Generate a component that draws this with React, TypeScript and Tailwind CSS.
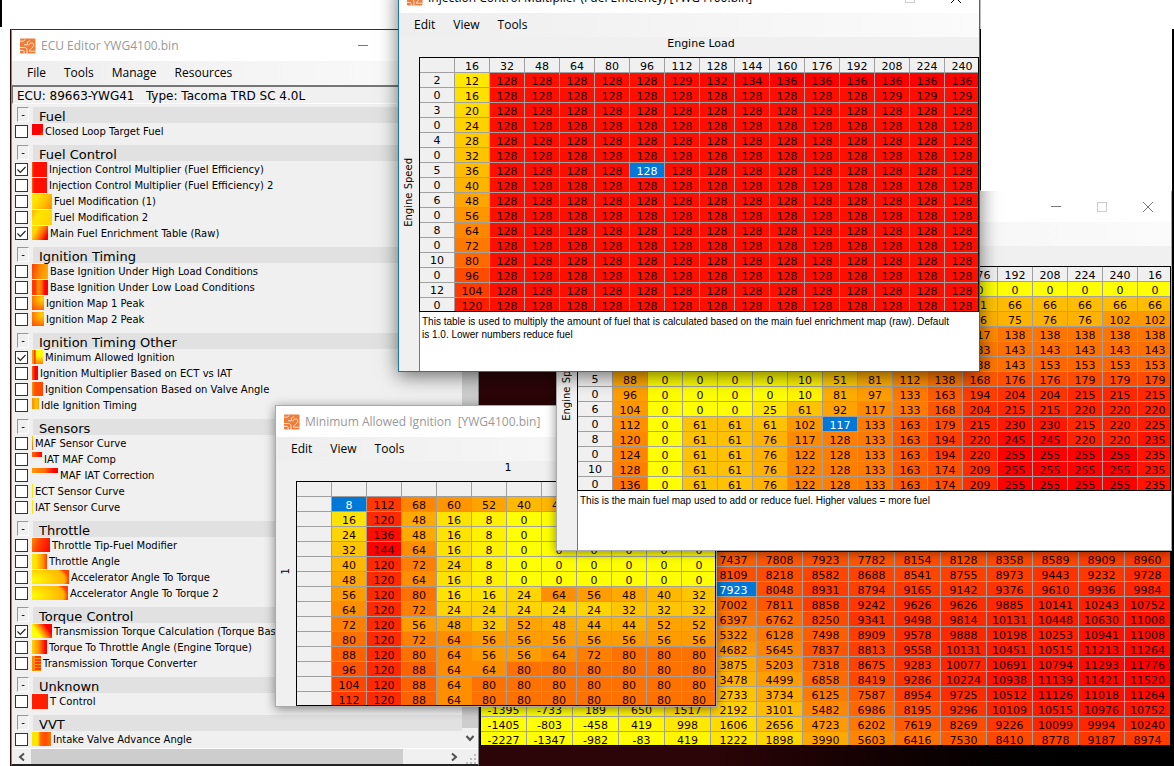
import React from "react";

type Cell = number | null;

const MENU_FONT = "font-['Open_Sans','Noto_Sans',sans-serif]";

/* Splits a block of text into rows of numbers; "." marks a cell with no value. */
function parse(block: string): Cell[][] {
  return block
    .trim()
    .split("\n")
    .map((line) => line.trim().split(/\s+/).map((v) => (v === "." ? null : Number(v))));
}

/* Yellow at zero, through orange, to red at the table's maximum. */
function heat(value: Cell, max: number): string {
  if (value === null) return "rgb(255, 200, 0)";
  const ratio = Math.min(1, Math.max(0, value / max));
  return `rgb(255, ${Math.round(255 * (1 - ratio))}, 0)`;
}

const injection: Cell[][] = [
  [12, 128, 128, 128, 128, 128, 129, 132, 134, 136, 136, 136, 136, 136, 136],
  [16, 128, 128, 128, 128, 128, 128, 128, 128, 128, 128, 128, 129, 129, 129],
  ...[20, 24, 28, 32, 36, 40, 48, 56, 64, 72, 80, 96, 104, 120].map((first) => [
    first,
    ...Array<number>(14).fill(128),
  ]),
];

const minimum = parse(`
8 112 68 60 52 40 40 . . . .
16 120 48 16 8 0 0 0 0 0 0
24 136 48 16 8 0 0 0 0 0 0
32 144 64 16 8 0 0 0 0 0 0
40 120 72 24 8 0 0 0 0 0 0
48 120 64 16 8 0 0 0 0 0 0
56 120 80 16 16 24 64 56 48 40 32
64 120 72 24 24 24 24 24 32 32 32
72 120 56 48 32 52 48 44 44 52 52
80 120 72 64 56 56 56 56 56 56 56
88 120 80 64 56 56 64 72 80 80 80
96 120 88 64 64 80 80 80 80 80 80
104 120 88 64 80 80 80 80 80 80 80
112 120 88 64 80 80 80 80 80 80 80
`);

const mainFuel = parse(`
. . . . . . . . . . 0 0 0 0 0 0
. . . . . . . . . . 61 66 66 66 66 66
. . . . . . . . . . 76 75 76 76 102 102
. . . . . . . . . . 117 138 138 138 138 138
. . . . . . . . . . 133 143 143 143 143 143
. . . . . . . . . . 138 143 153 153 153 153
88 0 0 0 0 10 51 81 112 138 168 176 176 179 179 179
96 0 0 0 0 10 81 97 133 163 194 204 204 215 215 215
104 0 0 0 25 61 92 117 133 168 204 215 215 220 220 220
112 0 61 61 61 102 117 133 163 179 215 230 230 215 220 225
120 0 61 61 76 117 128 133 163 194 220 245 245 220 220 235
124 0 61 61 76 122 128 133 163 194 220 255 255 255 255 235
128 0 61 61 76 122 128 133 163 174 209 255 255 255 255 235
136 0 61 61 76 122 128 133 163 174 209 255 255 255 255 235
`);

const torque = parse(`
. . . . . 7437 7808 7923 7782 8154 8128 8358 8589 8909 8960
. . . . . 8109 8218 8582 8688 8541 8755 8973 9443 9232 9728
. . . . . 7923 8048 8931 8794 9165 9142 9376 9610 9936 9984
. . . . . 7002 7811 8858 9242 9626 9626 9885 10141 10243 10752
. . . . . 6397 6762 8250 9341 9498 9814 10131 10448 10630 11008
. . . . . 5322 6128 7498 8909 9578 9888 10198 10253 10941 11008
. . . . . 4682 5645 7837 8813 9558 10131 10451 10515 11213 11264
. . . . . 3875 5203 7318 8675 9283 10077 10691 10794 11293 11776
. . . . . 3478 4499 6858 8419 9286 10224 10938 11139 11421 11520
. . . . . 2733 3734 6125 7587 8954 9725 10512 11126 11018 11264
-1395 -733 189 650 1517 2192 3101 5482 6986 8195 9296 10109 10515 10976 10752
-1405 -803 -458 419 998 1606 2656 4723 6202 7619 8269 9226 10099 9994 10240
-2227 -1347 -982 -83 419 1222 1898 3990 5603 6416 7530 8410 8778 9187 8974
`);

type GridProps = {
  label: string;
  data: Cell[][];
  max: number;
  selected: [number, number];
  columns?: string[];
  rows?: string[];
  wide?: boolean;
};

function HeatTable({ label, data, max, selected, columns, rows, wide }: GridProps) {
  const count = data[0].length;
  const width = wide ? "w-[46px]" : "w-[35px]";
  const cell = "h-[15px] border-r border-b border-[#a0a0a0] px-0 pb-0 text-center font-normal";
  return (
    <table
      aria-label={label}
      className="-mb-0.5 w-max table-fixed border-separate border-spacing-0 text-[11px] text-black"
    >
      <colgroup>
        {rows && <col className="w-[35px]" />}
        {data[0].map((_, i) => (
          <col key={i} className={width} />
        ))}
      </colgroup>
      {columns && (
        <thead>
          <tr>
            <td className={`${cell} bg-[#f0f0f0] pt-1 leading-[10px]`} />
            {Array.from({ length: count }, (_, i) => (
              <th key={i} scope="col" className={`${cell} bg-[#f0f0f0] pt-1 leading-[10px]`}>
                {columns[i]}
              </th>
            ))}
          </tr>
        </thead>
      )}
      <tbody>
        {data.map((line, r) => (
          <tr key={r}>
            {rows && (
              <th scope="row" className={`${cell} bg-[#f0f0f0] pt-0.5 leading-3`}>
                {rows[r]}
              </th>
            )}
            {line.map((value, c) => {
              const on = selected[0] === r && selected[1] === c;
              return (
                <td
                  key={c}
                  className={`${cell} pt-1 leading-[10px] ${on ? "text-white" : "text-[#1a0000]"}`}
                  style={{ backgroundColor: on ? "#0078d7" : heat(value, max) }}
                >
                  {value}
                </td>
              );
            })}
          </tr>
        ))}
      </tbody>
    </table>
  );
}

function AppIcon() {
  return (
    <svg viewBox="0 0 16 16" className="size-4 shrink-0" aria-hidden="true">
      <rect x="0" y="0.5" width="15.5" height="15" rx="1" fill="#ee7d3a" />
      <g fill="none" stroke="#fdeee2" strokeWidth="0.9">
        <path d="M0 3.2h3.2l2 -1.6" />
        <path d="M4 6.8h3.4V4.2L9.8 2.6" />
        <path d="M0 9.5h4.6c1.6 0 2.4 1 2.4 2.4v4" />
        <path d="M0 12.4h2.6c1 0 1.6.6 1.6 1.6v2" />
        <path d="M9 7.4c0-1.6 1-2.4 2.4-2.4s2.4.8 2.4 2.2c0 2.4-4 3.4-4.4 6h6.4" />
      </g>
    </svg>
  );
}

function TitleBar({ title, active }: { title: string; active?: boolean }) {
  const stroke = active ? "stroke-black" : "stroke-[#777]";
  const button = "flex h-full w-[46px] items-center justify-center";
  return (
    <header className={`flex h-[31px] shrink-0 items-center bg-white pl-2 ${MENU_FONT}`}>
      <AppIcon />
      <h2
        className={`ml-[5px] flex-1 truncate text-xs font-normal whitespace-pre ${active ? "text-black" : "text-[#999]"}`}
      >
        {title}
      </h2>
      <button type="button" aria-label="Minimize" className={button}>
        <svg viewBox="0 0 10 10" className={`size-2.5 ${stroke}`}>
          <path d="M0 4.5h10" />
        </svg>
      </button>
      <button type="button" aria-label="Maximize" disabled className={button}>
        <svg viewBox="0 0 10 10" className="size-2.5 fill-none stroke-[#ccc]">
          <rect x="0.5" y="0.5" width="9" height="9" />
        </svg>
      </button>
      <button type="button" aria-label="Close" className={button}>
        <svg viewBox="0 0 10 10" className={`size-2.5 ${stroke}`}>
          <path d="M0 0l10 10M10 0L0 10" />
        </svg>
      </button>
    </header>
  );
}

function MenuBar({ items }: { items: string[] }) {
  return (
    <nav
      className={`flex h-6 shrink-0 items-center bg-linear-to-r from-[#eeeeee] to-[#fbfbfb] px-1.5 text-xs text-black ${MENU_FONT}`}
    >
      {items.map((item) => (
        <button key={item} type="button" className="px-[9px]">
          {item}
        </button>
      ))}
    </nav>
  );
}

type TableWindowProps = GridProps & {
  title: string;
  active?: boolean;
  xLabel: string;
  yLabel: string;
  note?: string;
  place: string;
};

function TableWindow({ title, active, xLabel, yLabel, note, place, ...grid }: TableWindowProps) {
  return (
    <section
      className={`absolute flex flex-col overflow-hidden border bg-[#f0f0f0] ${active ? "border-[#1b74b8] shadow-[0_4px_18px_rgba(0,0,0,0.55)]" : "border-[#aaa] shadow-[0_2px_10px_rgba(0,0,0,0.45)]"} ${place}`}
    >
      <TitleBar title={title} active={active} />
      <MenuBar items={["Edit", "View", "Tools"]} />
      <div className="flex">
        <div className="flex w-5 shrink-0 items-center justify-center pb-6 text-[10px] leading-none text-black">
          <span className="rotate-180 [writing-mode:vertical-rl]">{yLabel}</span>
        </div>
        <div className="min-w-0 flex-1">
          <p className="h-5 pt-px pl-1 text-center text-[11px] leading-3 text-black">{xLabel}</p>
          <div className="overflow-hidden border border-black">
            <HeatTable {...grid} />
          </div>
          {note && (
            <p className="h-[59px] border-l border-[#777] bg-white pt-[3px] pl-0.5 font-['Liberation_Sans',Arial,sans-serif] text-[10px] leading-[13px] whitespace-pre-line text-black">
              {note}
            </p>
          )}
        </div>
      </div>
    </section>
  );
}

type Item = { name: string; thumb: string; checked?: boolean };

const groups: { name: string; items: Item[] }[] = [
  {
    name: "Fuel",
    items: [
      { name: "Closed Loop Target Fuel", thumb: "w-[11px] h-[11px] bg-[linear-gradient(135deg,#f00_75%,#f50)]" },
    ],
  },
  {
    name: "Fuel Control",
    items: [
      { name: "Injection Control Multiplier (Fuel Efficiency)", checked: true, thumb: "w-[15px] h-[15px] bg-[linear-gradient(90deg,#f60_0,#ff0f00_2px)]" },
      { name: "Injection Control Multiplier (Fuel Efficiency) 2", thumb: "w-[15px] h-[15px] bg-[linear-gradient(90deg,#f60_0,#ff0f00_2px)]" },
      { name: "Fuel Modification (1)", thumb: "w-5 h-[15px] bg-[linear-gradient(120deg,#ffe600_20%,#ffc000_60%,#ff8c00)]" },
      { name: "Fuel Modification 2", thumb: "w-5 h-[15px] bg-[linear-gradient(120deg,#ffb400,#ffe600_30%,#ffd000)]" },
      { name: "Main Fuel Enrichment Table (Raw)", checked: true, thumb: "w-4 h-[14px] bg-[linear-gradient(120deg,#ffd800_25%,#ff6a00_60%,#f00_85%)]" },
    ],
  },
  {
    name: "Ignition Timing",
    items: [
      { name: "Base Ignition Under High Load Conditions", thumb: "w-4 h-[15px] bg-[linear-gradient(100deg,#ff3c00,#ff8c00_50%,#ffb400)]" },
      { name: "Base Ignition Under Low Load Conditions", thumb: "w-4 h-[15px] bg-[linear-gradient(90deg,#ff3c00_20%,#ff9600_40%,#ff6a00_60%,#f00_80%)]" },
      { name: "Ignition Map 1 Peak", thumb: "w-3 h-[14px] bg-[radial-gradient(circle_at_80%_20%,#ffd800,#ff8c00_50%,#ff4600)]" },
      { name: "Ignition Map 2 Peak", thumb: "w-3 h-[14px] bg-[radial-gradient(circle_at_80%_20%,#ffd800,#ff8c00_50%,#ff4600)]" },
    ],
  },
  {
    name: "Ignition Timing Other",
    items: [
      { name: "Minimum Allowed Ignition", checked: true, thumb: "w-[11px] h-[14px] bg-[linear-gradient(90deg,#ff9600_15%,#f20_25%,transparent_40%),linear-gradient(180deg,#ff0_40%,#ff8000)]" },
      { name: "Ignition Multiplier Based on ECT vs IAT", thumb: "w-1.5 h-[14px] bg-[linear-gradient(90deg,#ff6a00,#f00_50%)]" },
      { name: "Ignition Compensation Based on Valve Angle", thumb: "w-[11px] h-[14px] bg-[linear-gradient(90deg,#f7a000,#ff5000_25%,#ff4600)]" },
      { name: "Idle Ignition Timing", thumb: "w-[7px] h-[11px] bg-[linear-gradient(90deg,#ff8c00,#ffc800_60%,#ffa000)]" },
    ],
  },
  {
    name: "Sensors",
    items: [
      { name: "MAF Sensor Curve", thumb: "w-px h-[14px] bg-[linear-gradient(180deg,#ffc800,#ff6a00)]" },
      { name: "IAT MAF Comp", thumb: "w-2.5 h-[5px] bg-[linear-gradient(90deg,#ff6a00,#f00)]" },
      { name: "MAF IAT Correction", thumb: "w-[26px] h-[5px] bg-[linear-gradient(90deg,#ff9600,#ff6a00_50%,#f00_85%)]" },
      { name: "ECT Sensor Curve", thumb: "w-px h-[14px] bg-[#ffe600]" },
      { name: "IAT Sensor Curve", thumb: "w-px h-[14px] bg-[#ffe600]" },
    ],
  },
  {
    name: "Throttle",
    items: [
      { name: "Throttle Tip-Fuel Modifier", thumb: "w-[18px] h-[14px] bg-[linear-gradient(110deg,#ff8c00,#ff4600_35%,#f00)]" },
      { name: "Throttle Angle", thumb: "w-[15px] h-[15px] bg-[linear-gradient(90deg,#ffe600_25%,#ff9600_70%,#ff3c00)]" },
      { name: "Accelerator Angle To Torque", thumb: "w-[37px] h-[14px] bg-[radial-gradient(ellipse_37px_18px_at_0_70%,#ff0,#ffb400_88%,#ff3c00_100%)]" },
      { name: "Accelerator Angle To Torque 2", thumb: "w-9 h-[14px] bg-[radial-gradient(ellipse_36px_18px_at_0_70%,#ff0,#ffb400_88%,#ff3c00_100%)]" },
    ],
  },
  {
    name: "Torque Control",
    items: [
      { name: "Transmission Torque Calculation (Torque Based)", checked: true, thumb: "w-5 h-[14px] bg-[linear-gradient(55deg,#ff0_30%,#ff8c00_52%,#f00_75%)]" },
      { name: "Torque To Throttle Angle (Engine Torque)", thumb: "w-[15px] h-[14px] bg-[linear-gradient(90deg,#ffd800,#ff8c00_45%,#f00_90%)]" },
      { name: "Transmission Torque Converter", thumb: "w-[9px] h-[15px] bg-[linear-gradient(90deg,#ff8c00_30%,transparent_30%),repeating-linear-gradient(180deg,#ff3c00_0,#ff3c00_2px,#ff9600_2px,#ff9600_3px)]" },
    ],
  },
  {
    name: "Unknown",
    items: [{ name: "T Control", thumb: "w-4 h-[15px] bg-[#ff1e00]" }],
  },
  {
    name: "VVT",
    items: [
      { name: "Intake Valve Advance Angle", thumb: "w-[19px] h-[14px] bg-[linear-gradient(90deg,#ffe600_30%,#ff6a00_45%,#ff4600_70%,#ff7800)]" },
    ],
  },
];

function ItemRow({ item, id }: { item: Item; id: string }) {
  return (
    <li className="flex h-4 items-center">
      <span className="mr-1 ml-0.5 grid size-[13px] shrink-0">
        <input
          id={id}
          type="checkbox"
          defaultChecked={item.checked}
          className="peer col-start-1 row-start-1 size-[13px] appearance-none border border-[#333] bg-white"
        />
        <svg
          viewBox="0 0 13 13"
          className="pointer-events-none invisible col-start-1 row-start-1 size-[13px] fill-none stroke-[#222] peer-checked:visible"
          aria-hidden="true"
        >
          <path d="M2.5 6.5l2.8 2.8L10.5 4" strokeWidth="1.2" />
        </svg>
      </span>
      <span className="flex h-full shrink-0 items-start pt-px">
        <span className={`block ${item.thumb}`} />
      </span>
      <label htmlFor={id} className="ml-0.5 pt-0.5 text-[10px] leading-4 whitespace-nowrap">
        {item.name}
      </label>
    </li>
  );
}

function Editor() {
  return (
    <section className="absolute top-[29px] left-[11px] flex h-[737px] w-[468px] flex-col overflow-hidden border border-b-2 border-[#888] border-t-[#333] border-b-[#222] bg-[#f0f0f0] text-black">
      <TitleBar title="ECU Editor YWG4100.bin" />
      <MenuBar items={["File", "Tools", "Manage", "Resources"]} />
      <p className="h-[19px] shrink-0 border-t-2 border-l border-b border-[#777] border-b-white pl-1 text-xs leading-[19px] whitespace-pre">
        {"ECU: 89663-YWG41   Type: Tacoma TRD SC 4.0L"}
      </p>
      <div className="flex min-h-0 flex-1">
        <div className="flex min-w-0 flex-1 flex-col gap-1.5 overflow-hidden pt-[3px] pl-px">
          {groups.map((group, g) => (
            <section key={group.name}>
              <div className="flex h-4">
                <button
                  type="button"
                  aria-label={`Collapse ${group.name}`}
                  className="mx-1 h-[15px] w-3 border border-white border-t-[#999] border-l-[#999] text-[10px] leading-[14px]"
                >
                  -
                </button>
                <h3 className="flex-1 bg-[#e1e1e1] pl-1.5 text-[13px] leading-5 font-normal">{group.name}</h3>
              </div>
              <ul>
                {group.items.map((item, i) => (
                  <ItemRow key={item.name} item={item} id={`map-${g}-${i}`} />
                ))}
              </ul>
            </section>
          ))}
        </div>
        <div className="flex w-4 shrink-0 flex-col bg-[#f0f0f0]">
          <div className="flex-1 bg-[#cdcdcd]" />
          <button type="button" aria-label="Scroll down" className="flex h-5 items-center justify-center">
            <svg viewBox="0 0 10 10" className="size-2.5 fill-none stroke-[#505050]">
              <path d="M1.5 3l3.5 4 3.5-4" strokeWidth="2" />
            </svg>
          </button>
        </div>
      </div>
      <div className="flex h-4 shrink-0 items-center border-t border-white">
        <button type="button" aria-label="Scroll left" className="flex w-[19px] items-center justify-center">
          <svg viewBox="0 0 10 10" className="size-2.5 fill-none stroke-[#505050]">
            <path d="M7 1.5L3 5l4 3.5" strokeWidth="2" />
          </svg>
        </button>
        <div className="h-full w-[372px] bg-[#cdcdcd]" />
        <div className="flex-1" />
        <button type="button" aria-label="Scroll right" className="flex w-4 items-center justify-center">
          <svg viewBox="0 0 10 10" className="size-2.5 fill-none stroke-[#505050]">
            <path d="M3 1.5L7 5 3 8.5" strokeWidth="2" />
          </svg>
        </button>
        <svg viewBox="0 0 16 16" className="size-4 fill-[#bbb]" aria-hidden="true">
          <path d="M12 5h2v2h-2zM12 9h2v2h-2zM8 9h2v2H8zM12 13h2v2h-2zM8 13h2v2H8zM4 13h2v2H4z" />
        </svg>
      </div>
    </section>
  );
}

const loads = ["16", "32", "48", "64", "80", "96", "112", "128", "144", "160", "176", "192", "208", "224", "240", "16"];

export default function App() {
  return (
    <main className="relative h-screen w-full overflow-hidden bg-white font-['DejaVu_Sans',Verdana,sans-serif]">
      <div className="absolute top-0 left-0 h-[27px] w-0.5 bg-black" />
      <div className="absolute top-[29px] right-0 bottom-0 left-2.5 bg-linear-to-r from-[#2c0508] from-60% to-black" />

      <section className="absolute top-[552px] left-[480px] w-[691px] overflow-hidden border-r border-b border-l border-black">
        <HeatTable label="Transmission Torque Calculation" data={torque} max={11776} selected={[2, 5]} wide />
      </section>

      <Editor />

      <TableWindow
        place="top-[405px] left-[275px] w-[442px]"
        title="Minimum Allowed Ignition  [YWG4100.bin]"
        label="Minimum Allowed Ignition"
        xLabel="1"
        yLabel="1"
        data={minimum}
        max={144}
        selected={[0, 0]}
        columns={[]}
        rows={[]}
      />

      <TableWindow
        place="top-[190px] left-[556px] w-[616px]"
        title="Main Fuel Enrichment Table (Raw)  [YWG4100.bin]"
        label="Main Fuel Enrichment Table"
        xLabel="Engine Load"
        yLabel="Engine Speed"
        data={mainFuel}
        max={255}
        selected={[9, 6]}
        columns={loads}
        rows={["2", "0", "3", "0", "4", "0", "5", "0", "6", "0", "8", "0", "10", "0"]}
        note="This is the main fuel map used to add or reduce fuel. Higher values = more fuel"
      />

      <TableWindow
        active
        place="-top-[19px] left-[398px] w-[582px]"
        title="Injection Control Multiplier (Fuel Efficiency) [YWG4100.bin]"
        label="Injection Control Multiplier"
        xLabel="Engine Load"
        yLabel="Engine Speed"
        data={injection}
        max={136}
        selected={[6, 5]}
        columns={loads}
        rows={["2", "0", "3", "0", "4", "0", "5", "0", "6", "0", "8", "0", "10", "0", "12", "0"]}
        note={
          "This table is used to multiply the amount of fuel that is calculated based on the main fuel enrichment map (raw). Default\nis 1.0. Lower numbers reduce fuel"
        }
      />

      <div className="absolute top-0 left-[981px] h-[191px] w-[191px] bg-white" />
    </main>
  );
}
